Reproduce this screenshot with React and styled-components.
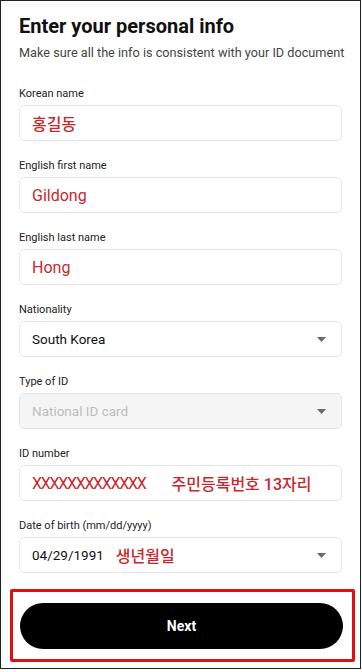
import styled, { createGlobalStyle } from "styled-components";

const GlobalStyle = createGlobalStyle`
    body {
        margin: 0;
        background: #fff;
        font-family: Roboto, "Noto Sans", "Noto Sans CJK KR", sans-serif;
    }
`;

const fields = [
    { label: "Korean name", value: "홍길동", note: true, hangul: true },
    { label: "English first name", value: "Gildong", note: true },
    { label: "English last name", value: "Hong", note: true },
    { label: "Nationality", value: "South Korea", select: true },
    { label: "Type of ID", value: "National ID card", select: true, disabled: true },
];

const Caret = () => (
    <svg width="9" height="5" viewBox="0 0 9 5">
        <path d="M0 0 L9 0 L4.5 5 Z" fill="#6a6a6a" />
    </svg>
);

const App = () => {
    return (
        <>
            <GlobalStyle />
            <Frame>
                <Header>
                    <Title>Enter your personal info</Title>
                    <Subtitle>Make sure all the info is consistent with your ID document</Subtitle>
                </Header>
                <Form>
                    {fields.map((f) => (
                        <Field key={f.label}>
                            <Label>{f.label}</Label>
                            <Box $disabled={f.disabled}>
                                <Value $note={f.note} $hangul={f.hangul} $disabled={f.disabled}>
                                    {f.value}
                                </Value>
                                {f.select && <Caret />}
                            </Box>
                        </Field>
                    ))}
                    <Field>
                        <Label>ID number</Label>
                        <Box>
                            <Value $note $tight>XXXXXXXXXXXXX</Value>
                            <Note $gap="26px">주민등록번호 13자리</Note>
                        </Box>
                    </Field>
                    <Field>
                        <Label>Date of birth (mm/dd/yyyy)</Label>
                        <Box>
                            <Value>04/29/1991</Value>
                            <Note $gap="12px">생년월일</Note>
                            <Caret />
                        </Box>
                    </Field>
                </Form>
                <Highlight>
                    <NextButton>Next</NextButton>
                </Highlight>
            </Frame>
        </>
    );
};

const Frame = styled.div`
    width: 361px;
    height: 669px;
    box-sizing: border-box;
    border: 1px solid #222;
    display: flex;
    flex-direction: column;
    overflow: hidden;
`;

const Header = styled.div`
    padding: 12px 18px 0 18px;
`;

const Title = styled.h1`
    margin: 0;
    font-size: 20px;
    font-weight: 700;
    color: #111;
    line-height: 26px;
`;

const Subtitle = styled.p`
    margin: 6px 0 0 0;
    font-size: 12.7px;
    color: #444;
    line-height: 16px;
    white-space: nowrap;
`;

const Form = styled.div`
    display: flex;
    flex-direction: column;
    gap: 18px;
    padding: 26px 18px 0 18px;
`;

const Field = styled.div`
    display: flex;
    flex-direction: column;
    gap: 4px;
`;

const Label = styled.div`
    font-size: 11px;
    line-height: 14px;
    color: #222;
`;

const Box = styled.div`
    height: 36px;
    box-sizing: border-box;
    border: 1px solid #e6e6e6;
    border-radius: 5px;
    background: ${(p) => (p.$disabled ? "#f5f5f5" : "#fff")};
    display: flex;
    align-items: center;
    padding: 0 15px 0 12px;

    svg {
        margin-left: auto;
    }
`;

const Value = styled.span`
    font-size: ${(p) => (p.$note ? "16px" : "13.5px")};
    font-weight: ${(p) => (p.$hangul ? 500 : 400)};
    color: ${(p) => (p.$note ? "#c8282d" : p.$disabled ? "#bdbdbd" : "#111")};
    letter-spacing: ${(p) => (p.$tight ? "-1.3px" : "0")};
    white-space: nowrap;
`;

const Note = styled.span`
    margin-left: ${(p) => p.$gap};
    font-size: 16px;
    font-weight: 500;
    color: #c8282d;
    white-space: nowrap;
`;

const Highlight = styled.div`
    margin: 16px 5px 0 9px;
    border: 3px solid #e01010;
    border-radius: 2px;
    padding: 11px 9px 10px 7px;
`;

const NextButton = styled.button`
    width: 100%;
    height: 46px;
    border: none;
    border-radius: 23px;
    background: #000;
    color: #fff;
    font-family: Roboto, "Noto Sans", sans-serif;
    font-size: 14px;
    font-weight: 700;
`;

export default App;
